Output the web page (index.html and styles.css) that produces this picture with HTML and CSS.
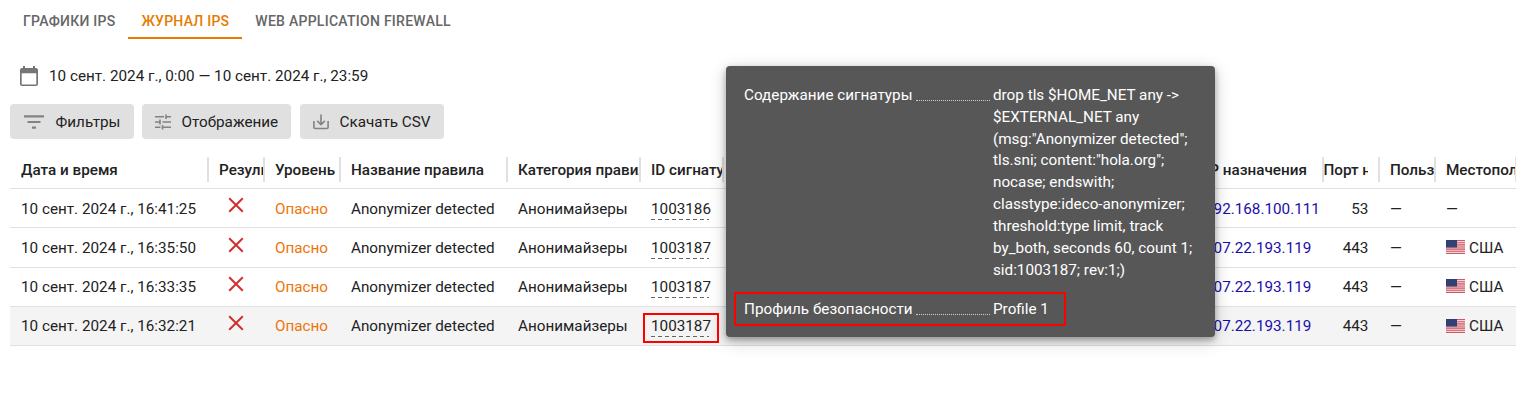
FILE: index.html
```html
<!DOCTYPE html>
<html lang="ru">
<head>
<meta charset="utf-8">
<title>Журнал IPS</title>
<link rel="stylesheet" href="styles.css">
</head>
<body>
<svg class="defs" width="0" height="0">
  <symbol id="cross" viewBox="0 0 16 16"><path d="M1.2 1.2 14.8 14.8M14.8 1.2 1.2 14.8" fill="none" stroke="#d32f2f" stroke-width="2"/></symbol>
  <symbol id="flag" viewBox="0 0 19 14">
    <path fill="#f0d5d8" d="M0 0h19v14H0z"/>
    <path stroke="#cf5864" stroke-width="1.08" d="M0 .54h19M0 2.69h19M0 4.85h19M0 7h19M0 9.15h19M0 11.3h19M0 13.46h19"/>
    <path fill="#2f3e70" d="M0 0h11v7.5H0z"/>
    <path stroke="#50608b" stroke-width=".5" stroke-dasharray=".6 1.4" d="M1 1.2h9.500M2 2.500h8.500M1 3.800h9.500M2 5.100h8.500M1 6.400h9.500"/>
  </symbol>
</svg>
<nav class="tabs">
  <a class="tab">ГРАФИКИ IPS</a>
  <a class="tab active">ЖУРНАЛ IPS</a>
  <a class="tab">WEB APPLICATION FIREWALL</a>
</nav>
<div class="period">
  <svg width="24" height="24" viewBox="0 0 24 24"><path fill="#757575" d="M19 4h-1V2h-2v2H8V2H6v2H5c-1.110 0-2 .9-2 2v14c0 1.100.89 2 2 2h14c1.100 0 2-.9 2-2V6c0-1.100-.9-2-2-2m0 16.500H4.700V9.300H19.300V20.500z"/></svg>
  <span>10 сент. 2024 г., 0:00 — 10 сент. 2024 г., 23:59</span>
</div>
<div class="toolbar">
  <button class="btn filters"><svg width="20" height="14" viewBox="0 0 20 14"><path fill="#828282" d="M0 .3h20v2.200H0zM3.500 5.900h13v2.200h-13zM8 11.500h4v2.200H8z"/></svg><span>Фильтры</span></button>
  <button class="btn display"><svg width="16" height="16" viewBox="0 0 16 16"><path fill="none" stroke="#828282" stroke-width="1.600" d="M0 2.800h9M11 2.800h5M11 .5v4.600M0 8h5M5 5.500v5M7.500 8H16M0 13.200h5.500M7.500 13.200H16M7.500 10.900v4.600"/></svg><span>Отображение</span></button>
  <button class="btn download"><svg width="16" height="16" viewBox="0 0 16 16"><path fill="none" stroke="#828282" stroke-width="1.600" d="M.9 7v6.200q0 1.300 1.300 1.300h11.600q1.300 0 1.300-1.300V7M8 .5v10M4.200 6.900 8 10.700l3.800-3.800"/></svg><span>Скачать CSV</span></button>
</div>
<main class="table">
  <div class="row head">
    <div>Дата и время</div><div>Результат</div><div>Уровень</div><div>Название правила</div><div>Категория правила</div><div>ID сигнатуры</div><div class="gap"></div><div>IP назначения</div><div class="port"><span>Порт назначения</span></div><div>Пользователь</div><div>Местоположение</div>
  </div>
  <div class="row">
    <div>10 сент. 2024 г., 16:41:25</div><div class="result"><svg><use href="#cross"/></svg></div><div class="level">Опасно</div><div>Anonymizer detected</div><div>Анонимайзеры</div><div><span class="sid">1003186</span></div><div></div><div class="ip">192.168.100.111</div><div class="port">53</div><div>—</div><div>—</div>
  </div>
  <div class="row">
    <div>10 сент. 2024 г., 16:35:50</div><div class="result"><svg><use href="#cross"/></svg></div><div class="level">Опасно</div><div>Anonymizer detected</div><div>Анонимайзеры</div><div><span class="sid">1003187</span></div><div></div><div class="ip">107.22.193.119</div><div class="port">443</div><div>—</div><div class="place"><svg><use href="#flag"/></svg>США</div>
  </div>
  <div class="row">
    <div>10 сент. 2024 г., 16:33:35</div><div class="result"><svg><use href="#cross"/></svg></div><div class="level">Опасно</div><div>Anonymizer detected</div><div>Анонимайзеры</div><div><span class="sid">1003187</span></div><div></div><div class="ip">107.22.193.119</div><div class="port">443</div><div>—</div><div class="place"><svg><use href="#flag"/></svg>США</div>
  </div>
  <div class="row hover">
    <div>10 сент. 2024 г., 16:32:21</div><div class="result"><svg><use href="#cross"/></svg></div><div class="level">Опасно</div><div>Anonymizer detected</div><div>Анонимайзеры</div><div><span class="sid">1003187</span></div><div></div><div class="ip">107.22.193.119</div><div class="port">443</div><div>—</div><div class="place"><svg><use href="#flag"/></svg>США</div>
  </div>
</main>
<aside class="tooltip">
  <div class="item"><div class="label">Содержание сигнатуры<i></i></div><div class="value">drop tls $HOME_NET any -&gt;<br>$EXTERNAL_NET any<br>(msg:"Anonymizer detected";<br>tls.sni; content:"hola.org";<br>nocase; endswith;<br>classtype:ideco-anonymizer;<br>threshold:type limit, track<br>by_both, seconds 60, count 1;<br>sid:1003187; rev:1;)</div></div>
  <div class="item"><div class="label">Профиль безопасности<i></i></div><div class="value">Profile 1</div></div>
</aside>
<div class="mark mark-id"></div>
<div class="mark mark-profile"></div>
</body>
</html>
```

FILE: styles.css
```css
* { box-sizing: border-box; }
body { margin: 0; width: 1525px; height: 411px; overflow: hidden; background: #fff; color: #222; font: 15.25px/21.82px Roboto, sans-serif; position: relative; }
.defs { position: absolute; }
svg { display: block; flex: none; }
.tabs { display: flex; padding-left: 10px; height: 39px; }
.tab { padding: 11px 13px 0; font-size: 14px; font-weight: 500; letter-spacing: .245px; color: #666; white-space: nowrap; }
.tab:last-child { letter-spacing: .265px; }
.active { color: #e57c00; border-bottom: 2px solid #e57c00; }
.period { display: flex; align-items: center; gap: 8px; height: 24px; margin: 25px 0 0 17px; }
.period span { padding-top: 1px; }
.toolbar { display: flex; gap: 8px; margin: 16px 0 0 10px; }
.btn { display: flex; align-items: center; height: 35px; border: 0; border-radius: 4px; background: #e0e0e0; color: #222; font: inherit; white-space: nowrap; }
.btn span { line-height: 22px; padding-top: .6px; }
.filters { width: 124px; padding: 0 0 0 14px; gap: 11.5px; }
.display { width: 149px; padding: 0 0 0 13px; gap: 10.5px; }
.download { width: 144px; margin-left: 1px; padding: 0 0 0 13px; gap: 10.5px; }
.table { width: 1506px; margin: 12px 0 0 10px; }
.row { display: grid; grid-template-columns: 199px 56px 76px 167px 133px 83px 471px 129px 56px 56px 80px; height: 39.25px; border-bottom: 1px solid #e0e0e0; }
.row > div { padding: .6px 0 0 10px; line-height: 39px; white-space: nowrap; overflow: hidden; }
.row > div:first-child { padding-left: 11px; }
.head { height: 38px; font-weight: 500; }
.head > div { height: 25px; margin-top: 6px; padding-top: 0; line-height: 26px; border-right: 2px solid #e0e0e0; }
.head > div:last-child { border-right-width: 1px; }
.head > .port { padding: 0; }
.head > .port span { display: block; width: 44px; overflow: hidden; text-align: left; text-indent: -.6px; }
.row > .port { padding-right: 11.6px; text-align: right; }
.row > .port:not(:has(span)) { padding-left: 0; }
.hover { background: #f4f4f4; }
.result svg { width: 16px; height: 16px; margin: 7.8px 0 0 9px; }
.level { color: #ee7408; }
.ip { color: #1a0dab; }
.sid { display: inline-block; height: 22px; line-height: 22px; background: repeating-linear-gradient(90deg, #666 0 4px, transparent 4px 7px) 0 100% / 58px 1px no-repeat; }
.place { display: flex; align-items: flex-start; gap: 4px; }
.place svg { width: 19px; height: 14px; margin-top: 11.4px; }
.tooltip { position: absolute; left: 726px; top: 66px; width: 489px; height: 271px; padding: 19px 18px 0; border-radius: 4px; background: #575757; color: #fff; box-shadow: 0 3px 6px rgba(0,0,0,.3), 0 4px 18px rgba(0,0,0,.2); }
.item { display: grid; grid-template-columns: 246px 1fr; gap: 3px; margin-bottom: 17.6px; }
.label { display: flex; height: 21px; gap: 3.5px; white-space: nowrap; }
.label i { flex: 1; height: 16px; border-bottom: 1px dotted #ccc; }
.value { white-space: nowrap; }
.mark { position: absolute; border: 2px solid #f00; }
.mark-id { left: 643px; top: 313px; width: 76px; height: 30px; }
.mark-profile { left: 734px; top: 292px; width: 332px; height: 34px; }
```
